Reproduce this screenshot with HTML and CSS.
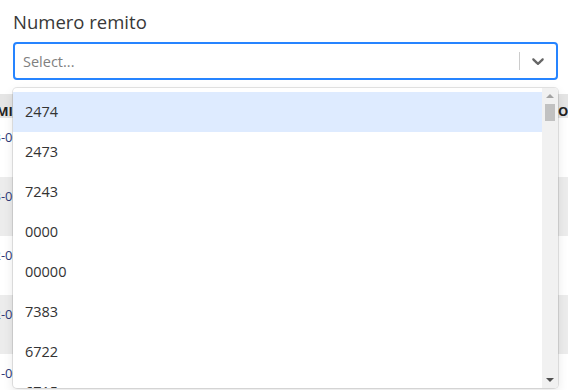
FILE: index.html
```html
<!DOCTYPE html>
<html lang="es">
    <head>
        <meta charset="utf-8" />
        <title>Remitos</title>
        <link rel="stylesheet" href="styles.css">
    </head>
    <body>
        <div class="page">
            <div class="field">
                <label class="fieldLabel">Numero remito</label>
                <div class="select">
                    <div class="control">
                        <div class="valueBox"><span class="placeholder">Select...</span></div>
                        <div class="indicators">
                            <span class="separator"></span>
                            <div class="indicator">
                                <svg height="20" width="20" viewBox="0 0 20 20"><path d="M4.516 7.548c0.436-0.446 1.043-0.481 1.576 0l3.908 3.747 3.908-3.747c0.533-0.481 1.141-0.446 1.574 0 0.436 0.445 0.408 1.197 0 1.615-0.406 0.418-4.695 4.502-4.695 4.502-0.217 0.223-0.502 0.335-0.787 0.335s-0.57-0.112-0.789-0.335c0 0-4.287-4.084-4.695-4.502s-0.436-1.17 0-1.615z"></path></svg>
                            </div>
                        </div>
                    </div>
                    <div class="menu">
                        <div class="menuList" id="menuList">
                            <div class="option focused">2474</div>
                            <div class="option">2473</div>
                            <div class="option">7243</div>
                            <div class="option">0000</div>
                            <div class="option">00000</div>
                            <div class="option">7383</div>
                            <div class="option">6722</div>
                            <div class="option">6715</div>
                        </div>
                        <div class="scrollbar">
                            <div class="scrollBtn">
                                <svg width="8" height="4" viewBox="0 0 8 4"><polygon points="0,4 4,0 8,4" fill="#a3a3a3"/></svg>
                            </div>
                            <div class="scrollTrack"><div class="scrollThumb"></div></div>
                            <div class="scrollBtn">
                                <svg width="8" height="4" viewBox="0 0 8 4"><polygon points="0,0 8,0 4,4" fill="#505050"/></svg>
                            </div>
                        </div>
                    </div>
                </div>
            </div>
            <div class="tableWrap">
                <div class="row head">
                    <div class="cell first"><span>FECHA EMIS</span></div>
                    <div class="cell mid"></div>
                    <div class="cell last"><span>OBSERVACIONES</span></div>
                </div>
                <div class="row">
                    <div class="cell first"><span>2021-03-00</span></div>
                    <div class="cell mid"></div>
                    <div class="cell last"></div>
                </div>
                <div class="row odd">
                    <div class="cell first"><span>2021-03-00</span></div>
                    <div class="cell mid"></div>
                    <div class="cell last"></div>
                </div>
                <div class="row">
                    <div class="cell first"><span>2021-02-00</span></div>
                    <div class="cell mid"></div>
                    <div class="cell last"></div>
                </div>
                <div class="row odd">
                    <div class="cell first"><span>2021-02-00</span></div>
                    <div class="cell mid"></div>
                    <div class="cell last"></div>
                </div>
                <div class="row">
                    <div class="cell first"><span>2021-01-00</span></div>
                    <div class="cell mid"></div>
                    <div class="cell last"></div>
                </div>
                <div class="row odd">
                    <div class="cell first"><span>2021-01-00</span></div>
                    <div class="cell mid"></div>
                    <div class="cell last"></div>
                </div>
            </div>
        </div>
    </body>
</html>
```
FILE: styles.css
```css
html, body {
    margin: 0;
    font-family: "Open Sans", "Noto Sans", sans-serif;
    background-color: #ffffff;
    color: #333333;
    overflow: hidden;
}

.page {
    padding: 9px 10px 0 13px;
}

.fieldLabel {
    display: block;
    font-size: 18.5px;
    line-height: 26px;
    color: #383838;
    margin-bottom: 7px;
}

.select {
    position: relative;
}

.control {
    display: flex;
    align-items: center;
    box-sizing: border-box;
    height: 38px;
    border: 2px solid #2684ff;
    border-radius: 4px;
    background-color: #fff;
}

.valueBox {
    flex: 1;
    padding: 0 8px;
}

.placeholder {
    font-size: 14.5px;
    color: #808080;
}

.indicators {
    display: flex;
    align-self: stretch;
    align-items: center;
}

.separator {
    align-self: stretch;
    width: 1px;
    margin: 8px 0;
    background-color: #cccccc;
}

.indicator {
    display: flex;
    padding: 8px;
    color: #666666;
}

.indicator svg {
    fill: currentColor;
}

.menu {
    position: absolute;
    top: 100%;
    left: 0;
    right: 0;
    margin-top: 8px;
    z-index: 2;
    display: flex;
    height: 300px;
    overflow: hidden;
    background-color: #fff;
    border-radius: 4px;
    box-shadow: 0 0 0 1px rgba(0,0,0,0.1), 0 4px 11px rgba(0,0,0,0.1);
}

.menuList {
    flex: 1;
    overflow: hidden;
    padding: 4px 0;
}

.scrollbar {
    display: flex;
    flex-direction: column;
    width: 16px;
    background-color: #f1f1f1;
}

.scrollBtn {
    display: flex;
    align-items: center;
    justify-content: center;
    height: 16px;
}

.scrollTrack {
    flex: 1;
    padding: 0 3px;
}

.scrollThumb {
    height: 17px;
    background-color: #c1c1c1;
}

.option {
    padding: 8px 12px;
    line-height: 24px;
    font-size: 14.5px;
    color: #333333;
}

.option.focused {
    background-color: #deebff;
}

.tableWrap {
    margin: 14px -10px 0 -13px;
}

.row {
    display: flex;
    height: 59px;
    background-color: #fff;
}

.row.odd {
    background-color: #ececec;
}

.row.head {
    height: 24px;
    background-color: #e5e5e5;
}

.cell {
    overflow: hidden;
    white-space: nowrap;
    font-size: 13px;
}

.cell.first {
    width: 20px;
    display: flex;
    justify-content: flex-end;
    color: #2e3a78;
    padding-top: 10px;
    line-height: 18px;
}

.cell.mid {
    flex: 1;
}

.cell.last {
    width: 10px;
    padding-top: 10px;
    line-height: 18px;
}

.head .cell {
    padding-top: 8px;
    font-weight: bold;
    color: #222;
}
```
